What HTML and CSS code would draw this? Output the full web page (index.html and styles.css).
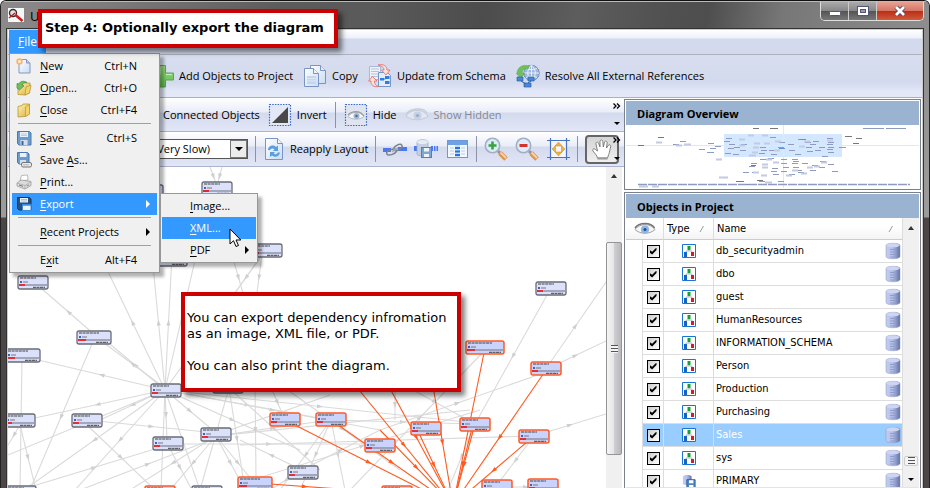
FILE: index.html
```html
<!DOCTYPE html>
<html lang="en">
<head>
<meta charset="utf-8">
<title>Dependency diagram</title>
<link rel="stylesheet" href="styles.css">
</head>
<body>
<svg class="defs" aria-hidden="true">
  <defs>
    <linearGradient id="gDb" x1="0" x2="1"><stop offset="0" stop-color="#c3cdf0"/><stop offset=".45" stop-color="#b4c0ea"/><stop offset="1" stop-color="#6272a3"/></linearGradient>
    <linearGradient id="gFold" x1="0" y1="0" x2="1" y2="1"><stop offset="0" stop-color="#fdf3b8"/><stop offset="1" stop-color="#dcae3c"/></linearGradient>
    <linearGradient id="gPage" x1="0" y1="0" x2="1" y2="1"><stop offset="0" stop-color="#fff"/><stop offset="1" stop-color="#c9dcf5"/></linearGradient>
    <linearGradient id="gPlus" x1="0" y1="0" x2="0" y2="1"><stop offset="0" stop-color="#9bdc83"/><stop offset="1" stop-color="#5cba4c"/></linearGradient>
  </defs>
  <symbol id="i-new" viewBox="0 0 16 16"><path d="M3 1.500h7.500l3.500 3.500v10h-11z" fill="url(#gPage)" stroke="#8298bd"/><path d="M10.500 1.500v3.500h3.500" fill="#b9d0ee" stroke="#8298bd"/><circle cx="3.500" cy="3.500" r="3.200" fill="#f6b27a"/><circle cx="3.500" cy="3.500" r="1.500" fill="#fff3c4"/></symbol>
  <symbol id="i-close" viewBox="0 0 16 16"><path d="M2 4.500l4-1 1-1.500h6.500v10l-4.500 2.500-7 .5z" fill="url(#gFold)" stroke="#b9962f" stroke-width=".8"/><path d="M9.500 5l4-2.500v9.500l-4 2.500z" fill="#f2d36d" stroke="#b9962f" stroke-width=".7"/></symbol>
  <symbol id="i-open" viewBox="0 0 16 16"><path d="M2 6l4-1 2-2h6l-.5 10-4.500 2-7-.5z" fill="url(#gFold)" stroke="#b9962f" stroke-width=".8"/><path d="M10 7l5-2-1.500 8-4.500 2z" fill="#f2d36d" stroke="#b9962f" stroke-width=".7"/><path d="M1 8V3.500L3 4c1-3 5-3.500 8-1.500-3-.5-4.500.5-5 2.500l2 .8L3.500 10z" fill="#72c05b" stroke="#3f8d39" stroke-width=".7"/></symbol>
  <symbol id="i-save" viewBox="0 0 16 16"><path d="M1.500 1.500h12l1.500 1.500v12h-12l-1.500-1.500z" fill="#6c9bd0" stroke="#4a78ad"/><path d="M4 2h8v5H4z" fill="#e9f1f9"/><path d="M5 4h6M5 5.500h6" stroke="#a9bccd" stroke-width=".7"/><path d="M4.500 10h7v5h-7z" fill="#d4dfeb"/><path d="M5.500 11h2v4h-2z" fill="#3d6695"/></symbol>
  <symbol id="i-saveas" viewBox="0 0 16 16"><path d="M1.500 .5h10l1.500 1.500v10h-10l-1.500-1.500z" fill="#6c9bd0" stroke="#4a78ad"/><path d="M4 1h6.500v4H4z" fill="#e9f1f9"/><path d="M4 8h6v4H4z" fill="#d4dfeb"/><rect x="5.500" y="10.500" width="10" height="4.500" rx="1.500" fill="#e8e8e8" stroke="#777"/><path d="M7.500 12.800h6" stroke="#888" stroke-dasharray="1 1"/></symbol>
  <symbol id="i-print" viewBox="0 0 16 16"><path d="M4 7l1.500-5.500 6-.5L12 6z" fill="#fff" stroke="#aaa" stroke-width=".8"/><path d="M1 9l4-3 10 1.500v4L9 15l-8-3z" fill="#dcdcdc" stroke="#999" stroke-width=".8"/><path d="M1 9l8 2.500 6-4M9 11.500V15" fill="none" stroke="#aaa" stroke-width=".8"/><path d="M3 11l4 1.300" stroke="#777"/><path d="M11 12l2-1.200" stroke="#73b565" stroke-width="1.200"/></symbol>
  <symbol id="i-export" viewBox="0 0 16 16"><path d="M1.500 1.500h12l1.500 1.500v11h-12l-1.500-1.500z" fill="#24517f" stroke="#153759"/><path d="M4 2h8v4.500H4z" fill="#e9f1f9"/><path d="M5 3.500h6M5 5h6" stroke="#9ab" stroke-width=".7"/><rect x="6.500" y="8.500" width="8.500" height="6" fill="#e8f4ff" stroke="#3a8be0"/><path d="M6.500 9h8.500" stroke="#3a8be0" stroke-width="1.500"/></symbol>
  <symbol id="i-plus" viewBox="0 0 24 24"><path d="M8.500 1.500h7v7.500h8v7h-8v7h-7v-7h-7V9h7z" fill="url(#gPlus)" stroke="#5aa652" stroke-linejoin="round"/><path d="M10 3v7.500H3M16 10.500h6" fill="none" stroke="#c5efb5"/></symbol>
  <symbol id="i-copy" viewBox="0 0 24 24"><path d="M7.500 1.500h10l5 5v13h-15z" fill="url(#gPage)" stroke="#7a95c4"/><path d="M17.500 1.500v5h5" fill="#dfe9f8" stroke="#7a95c4"/><path d="M1.500 4.500h9l5 5v13h-14z" fill="url(#gPage)" stroke="#7a95c4"/><path d="M10.500 4.500v5h5" fill="#eef4fc" stroke="#7a95c4"/><path d="M4 12h9v8H4z" fill="#c5d5ec"/><path d="M4 14.500h9M4 17h9" stroke="#dfe9f6"/></symbol>
  <symbol id="i-update" viewBox="0 0 24 24"><path d="M1.500 2.500h11v13h-11z" fill="#eef2fb" stroke="#a9b7da"/><path d="M3 5h8M3 7.500h8M3 10h8M3 12.500h8" stroke="#b4c0de"/><path d="M10.500 8.500h9l3 3v11h-12z" fill="#e1ebfa" stroke="#7a95c4"/><path d="M12 14h4v2.500h-4zM17 12h4.500v3H17zM17 17h4.500v3H17z" fill="#2f7dde"/><path d="M15.500 15h2" stroke="#2f7dde"/><path d="M10 1c6-1.500 9 1.500 9 5h3l-4 5-4.500-5h2.500c0-2.500-2-4-6-5z" fill="#fbe0dc" stroke="#e0695f" stroke-width=".8"/><path d="M10.500 22.500c-5 .8-8-1.500-7.500-5.500H.5l4-4.500 4.500 4.500H6.500c-.2 2.500 1 4.500 4 5.500z" fill="#fbe0dc" stroke="#e0695f" stroke-width=".8"/></symbol>
  <symbol id="i-resolve" viewBox="0 0 24 24"><circle cx="15.500" cy="9" r="7.700" fill="#9db9e0" stroke="#7190c2"/><path d="M15.500 1.500v15M8 9h15M10 4.500c4 1.500 7 1.500 11 0M10 13.500c4-1.500 7-1.500 11 0M15.500 1c-5 5-5 11 0 16M15.500 1c5 5 5 11 0 16" fill="none" stroke="#edf3fc" stroke-width=".9"/><path d="M1 10C1 3 7 0 13 2l-1 3c-4-1-6 1-6 4l3 .5L4.500 14 .5 9.500z" fill="#6fbf5b" stroke="#58a94f" stroke-width=".6"/><path d="M1 13h6v4H1zM12 13h6v4h-6zM8 19h7v4H8z" fill="#4b86d6" stroke="#2e62ab" stroke-width=".7"/><path d="M5 17l5 3M15 17l-3 2" stroke="#2e62ab"/></symbol>
  <symbol id="i-invert" viewBox="0 0 24 24"><rect x="1.500" y="1.500" width="21" height="21" fill="#e3e8f6" stroke="#3a66c4" stroke-width="1.200" stroke-dasharray="1.500 1.200"/><path d="M20 4v16H4z" fill="#494949"/></symbol>
  <symbol id="i-hide" viewBox="0 0 24 24"><rect x="1.500" y="1.500" width="21" height="21" fill="#dfe4f0" stroke="#3a66c4" stroke-width="1.200" stroke-dasharray="1.500 1.200"/><path d="M4 13.500c4-5.500 12-5.500 16 0-4 3.500-12 3.500-16 0z" fill="#f7f8fa" stroke="#a5a9af" stroke-width=".8"/><path d="M4 12c4-4.500 12-5 16 1" fill="none" stroke="#9a9ea4" stroke-width="1.200"/><circle cx="12.500" cy="13" r="3" fill="#9db5d6"/><circle cx="12.500" cy="13" r="1.200" fill="#56688a"/></symbol>
  <symbol id="i-eyeoff" viewBox="0 0 24 24"><path d="M1 13C6 5.500 18 5.500 23 13c-5 5-17 5-22 0z" fill="#e2e7f1" stroke="#c3c9d8" stroke-width="1"/><path d="M1 11C6 5 18 4 22 10" fill="none" stroke="#c6ccda" stroke-width="1.500"/><circle cx="12.500" cy="12.500" r="4" fill="#c5d1e6"/><circle cx="12.500" cy="12.500" r="1.600" fill="#9fabc4"/></symbol>
  <symbol id="i-eye" viewBox="0 0 22 14"><path d="M1 7.500C5 1 17 1 21 7.500c-5 5-15 5-20 0z" fill="#f6f6f6" stroke="#9f9f9f"/><path d="M1 6C5 0 17 0 20.500 6" fill="none" stroke="#757575" stroke-width="1.600"/><circle cx="11" cy="7.500" r="4" fill="#8fb3e2"/><circle cx="11" cy="7.500" r="1.500" fill="#1f4c8c"/></symbol>
  <symbol id="i-refresh" viewBox="0 0 24 24"><path d="M2.500 1.500h12l5 5v16h-17z" fill="url(#gPage)" stroke="#7a95c4"/><path d="M14.500 1.500v5h5" fill="#eef4fc" stroke="#7a95c4"/><path d="M5 13c0-4 5-6 8-3l2-1.500V14h-5l1.500-1.700c-2-1.500-4-.7-4.500 1zM17 15.500c-.5 4-5 5.500-8 3L7 20v-5h5l-1.500 1.600c2 1.400 3.700.6 4.300-1.100z" fill="#5b9ee0"/></symbol>
  <symbol id="i-link" viewBox="0 0 24 24"><path d="M0 11h8v4H0zM15 10h9v4h-9z" fill="#4b78f0"/><g fill="none" stroke="#7d838d" stroke-width="1.500"><ellipse cx="8.500" cy="15" rx="5" ry="2.500" transform="rotate(-20 8.500 15)"/><ellipse cx="15" cy="10.500" rx="4.500" ry="2.500" transform="rotate(-30 15 10.500)"/></g><path d="M9 14.500l6-3.500" stroke="#a5abb5" stroke-width="1.500"/></symbol>
  <symbol id="i-dbsave" viewBox="0 0 24 24"><path d="M0 9h4v5H0zM17 9h2v5h-2zM20 9h1.500v5H20zM22.500 9H24v5h-1.500z" fill="#4b78f0"/><path d="M3 5c0-3 11-3 11 0v12c0 2.500-11 2.500-11 0z" fill="#c4cfe2" stroke="#98a6c0" stroke-width=".7"/><ellipse cx="8.500" cy="5" rx="5.500" ry="2" fill="#e6ecf6"/><rect x="7.500" y="10.500" width="10" height="10" fill="#7ba6d6" stroke="#5580b0"/><path d="M10 11h5v3.500h-5zM10 17h5v3h-5z" fill="#eef3f9"/></symbol>
  <symbol id="i-table" viewBox="0 0 24 24"><rect x="2.500" y="3.500" width="20" height="17" fill="#f3f8ff" stroke="#6c98da"/><path d="M3 4h19v4H3z" fill="#6fa1e6"/><path d="M5 11h4M5 14h4M5 17h4M16 11h4M16 14h4M16 17h4" stroke="#b5cdee"/><path d="M10 8h5v12h-5z" fill="#c3dbf8"/><path d="M10 11h5M10 14.500h5M10 18h5" stroke="#2c71d8" stroke-width="2"/></symbol>
  <symbol id="i-zoomin" viewBox="0 0 24 24"><path d="M14 14l2.500 2.500" stroke="#8a98ad" stroke-width="3"/><path d="M16 16l6 6" stroke="#dd9450" stroke-width="5"/><path d="M16.500 15.500l5.500 5.500" stroke="#fcd3a2" stroke-width="1.800"/><circle cx="8.500" cy="8.500" r="7.200" fill="#dceafb" stroke="#a3aebf" stroke-width="1.600"/><path d="M8.500 4.500v8M4.500 8.500h8" stroke="#36a53c" stroke-width="2.600"/></symbol>
  <symbol id="i-zoomout" viewBox="0 0 24 24"><path d="M14 14l2.500 2.500" stroke="#8a98ad" stroke-width="3"/><path d="M16 16l6 6" stroke="#dd9450" stroke-width="5"/><path d="M16.500 15.500l5.500 5.500" stroke="#fcd3a2" stroke-width="1.800"/><circle cx="8.500" cy="8.500" r="7.200" fill="#dceafb" stroke="#a3aebf" stroke-width="1.600"/><path d="M4.500 8.500h8" stroke="#d4332c" stroke-width="2.800"/></symbol>
  <symbol id="i-fit" viewBox="0 0 24 24"><path d="M5 4h15v16H5z" fill="#f4f6fb"/><path d="M4.500 1v22M20.500 1v22M1 3.500h23M1 20.500h23" stroke="#4672c6" stroke-width="1.200"/><path d="M12.500 5l3.500 4H9zM12.500 19l3.500-4H9zM6 12l3.500-3.500v7zM19 12l-3.500-3.500v7z" fill="#f0b13c" stroke="#c58d2a" stroke-width=".5"/></symbol>
  <symbol id="i-hand" viewBox="0 0 24 24"><path d="M7.500 21c-.5-3-3-4.500-4.500-7-1-2 1-3 2.500-1.500L7.500 14 6 7c-.4-2 2-2.500 2.600-.6L10 10V4.500c0-2 2.600-2 2.800 0l.5 5.500 1.200-4.700c.5-1.800 2.800-1.300 2.600.6L16.500 11l1.700-2.500c1-1.500 3-.6 2.500 1.200-1 3.500-1 5.300-2 7.800l-1.200 3.500z" fill="#fff" stroke="#666" stroke-width=".8" stroke-linejoin="round"/><path d="M7.500 21.500h10" stroke="#999" stroke-width="2"/></symbol>
  <symbol id="i-schema" viewBox="0 0 14 14"><path d="M.5.500h13v13H.500z" fill="#fff" stroke="#1a74d4" /><path d="M7 4v3M4 10V7h6v3" fill="none" stroke="#a8b6c4"/><path d="M5.500 2h3v4h-3z" fill="#12a033"/><path d="M2 8h3v5H2z" fill="#1564c0"/><path d="M9 8h3v4H9z" fill="#d31c24"/></symbol>
  <symbol id="i-db" viewBox="0 0 16 18"><path d="M1 3.500C1 .500 15 .500 15 3.500v11c0 3-14 3-14 0z" fill="url(#gDb)" stroke="#8a97c2" stroke-width=".5"/><ellipse cx="8" cy="3.300" rx="6.700" ry="2" fill="#cdd5f3"/><path d="M5 7.500h5M5 10h5M5 12.500h5M5 15h5" stroke="#8d9ac6" stroke-width=".9"/></symbol>
  <symbol id="i-filegroup" viewBox="0 0 16 16"><path d="M1 3C1 .5 11 .5 11 3v8c0 2-10 2-10 0z" fill="url(#gDb)"/><path d="M5.500 6.500h9.500v9H5.500z" fill="#4f86c6" stroke="#2f5d92"/><path d="M8 7h5v3.500H8zM8 12.500h5V16H8z" fill="#fff"/></symbol>
  <symbol id="i-app" viewBox="0 0 16 16"><path d="M0 0h16v14H0z" fill="#f7f7f7"/><circle cx="5" cy="5" r="3.500" fill="#dfe3e8" stroke="#333" stroke-width="1.400"/><path d="M7.500 7l7 6" stroke="#cc1e20" stroke-width="2.500"/><path d="M1 10l6-5" stroke="#cc1e20" stroke-width="1.500"/></symbol>
  <symbol id="i-more" viewBox="0 0 8 6"><path d="M.500 .5L3 3 .5 5.500M4 .5L6.500 3 4 5.500" fill="none" stroke="#000" stroke-width="1.300"/></symbol>
  <symbol id="i-sort" viewBox="0 0 8 8"><path d="M1 7L4.500 1" stroke="#9a9a9a"/></symbol>
</svg>

<div class="window">
  <header class="titlebar">
    <svg class="app-icon"><use href="#i-app"/></svg>
    <span class="app-title">U</span>
    <div class="controls">
      <button class="ctl" aria-label="Minimize"><svg viewBox="0 0 14 10"><rect x="1.500" y="5.500" width="11" height="4" rx="1" fill="#fff" stroke="#555577"/></svg></button>
      <button class="ctl" aria-label="Restore"><svg viewBox="0 0 14 10"><rect x="1.500" y=".5" width="11" height="9" fill="#fff" stroke="#555577"/><rect x="4.500" y="3.500" width="5" height="3" fill="#9a9aa8" stroke="#555577"/></svg></button>
      <button class="ctl ctl-close" aria-label="Close"><svg viewBox="0 0 14 10"><path d="M3 1l8 8M11 1l-8 8" stroke="#56405a" stroke-width="4.500"/><path d="M3 1l8 8M11 1l-8 8" stroke="#fff" stroke-width="2.800"/></svg></button>
    </div>
  </header>

  <div class="client">
    <nav class="menubar">
      <button class="menu-top"><u>F</u>ile</button>
      <ul class="menu">
        <li><button><svg><use href="#i-new"/></svg><span><u>N</u>ew</span><kbd>Ctrl+N</kbd></button></li>
        <li><button><svg><use href="#i-open"/></svg><span><u>O</u>pen...</span><kbd>Ctrl+O</kbd></button></li>
        <li><button><svg><use href="#i-close"/></svg><span><u>C</u>lose</span><kbd>Ctrl+F4</kbd></button></li>
        <li class="rule"></li>
        <li><button><svg><use href="#i-save"/></svg><span><u>S</u>ave</span><kbd>Ctrl+S</kbd></button></li>
        <li><button><svg><use href="#i-saveas"/></svg><span>Save <u>A</u>s...</span></button></li>
        <li><button><svg><use href="#i-print"/></svg><span><u>P</u>rint...</span></button></li>
        <li class="parent"><button class="active"><svg><use href="#i-export"/></svg><span><u>E</u>xport</span><i class="more"></i></button>
          <ul class="menu submenu">
            <li><button><span><u>I</u>mage...</span></button></li>
            <li><button class="active"><span><u>X</u>ML...</span></button></li>
            <li><button><span><u>P</u>DF</span><i class="more"></i></button></li>
          </ul>
        </li>
        <li class="rule"></li>
        <li><button><span class="no-icon"><u>R</u>ecent Projects</span><i class="more"></i></button></li>
        <li class="rule"></li>
        <li><button><span class="no-icon">E<u>x</u>it</span><kbd>Alt+F4</kbd></button></li>
      </ul>
    </nav>

    <div class="toolbar toolbar-main">
      <button class="tool"><svg><use href="#i-plus"/></svg>Add Objects to Project</button>
      <button class="tool"><svg><use href="#i-copy"/></svg>Copy</button>
      <button class="tool"><svg><use href="#i-update"/></svg>Update from Schema</button>
      <button class="tool"><svg><use href="#i-resolve"/></svg>Resolve All External References</button>
    </div>

    <div class="work">
      <main class="editor">
        <div class="toolbar toolbar-select">
          <button class="tool">Connected Objects</button>
          <button class="tool"><svg><use href="#i-invert"/></svg>Invert</button>
          <i class="divider"></i>
          <button class="tool"><svg><use href="#i-hide"/></svg>Hide</button>
          <button class="tool" disabled><svg><use href="#i-eyeoff"/></svg>Show Hidden</button>
          <button class="overflow" aria-label="More selection tools"><svg><use href="#i-more"/></svg><i class="down"></i></button>
        </div>
        <div class="toolbar toolbar-layout">
          <span class="combo"><select aria-label="Layout quality"><option>(Very Slow)</option></select><i class="drop"></i></span>
          <i class="divider"></i>
          <button class="tool"><svg><use href="#i-refresh"/></svg>Reapply Layout</button>
          <i class="divider"></i>
          <button class="tool" aria-label="Link"><svg><use href="#i-link"/></svg></button>
          <button class="tool" aria-label="Storage"><svg><use href="#i-dbsave"/></svg></button>
          <button class="tool" aria-label="Columns"><svg><use href="#i-table"/></svg></button>
          <i class="divider"></i>
          <button class="tool" aria-label="Zoom in"><svg><use href="#i-zoomin"/></svg></button>
          <button class="tool" aria-label="Zoom out"><svg><use href="#i-zoomout"/></svg></button>
          <button class="tool" aria-label="Fit"><svg><use href="#i-fit"/></svg></button>
          <i class="divider"></i>
          <button class="tool pressed" aria-label="Pan"><svg><use href="#i-hand"/></svg></button>
          <button class="overflow" aria-label="More layout tools"><svg><use href="#i-more"/></svg><i class="down"></i></button>
        </div>
        <div class="canvas-row">
          <svg class="canvas" id="diagram"></svg>
          <div class="scroll canvas-scroll"><i class="up"></i><div class="thumb"><i class="grip"></i></div></div>
        </div>
      </main>

      <aside class="side">
        <section class="panel">
          <h2>Diagram Overview</h2>
          <svg class="overview" id="overview"></svg>
        </section>
        <section class="panel panel-grow">
          <h2>Objects in Project</h2>
          <div class="objects">
            <table>
              <colgroup><col class="c-indent"><col class="c-check"><col class="c-type"><col></colgroup>
              <thead><tr><th colspan="2"><svg class="eye"><use href="#i-eye"/></svg></th><th>Type<svg class="sort"><use href="#i-sort"/></svg></th><th>Name<svg class="sort"><use href="#i-sort"/></svg></th></tr></thead>
              <tbody>
                <tr><td></td><td><input type="checkbox" checked aria-label="Show db_securityadmin"></td><td><svg class="kind"><use href="#i-schema"/></svg></td><td><div class="name">db_securityadmin<svg><use href="#i-db"/></svg></div></td></tr>
                <tr><td></td><td><input type="checkbox" checked aria-label="Show dbo"></td><td><svg class="kind"><use href="#i-schema"/></svg></td><td><div class="name">dbo<svg><use href="#i-db"/></svg></div></td></tr>
                <tr><td></td><td><input type="checkbox" checked aria-label="Show guest"></td><td><svg class="kind"><use href="#i-schema"/></svg></td><td><div class="name">guest<svg><use href="#i-db"/></svg></div></td></tr>
                <tr><td></td><td><input type="checkbox" checked aria-label="Show HumanResources"></td><td><svg class="kind"><use href="#i-schema"/></svg></td><td><div class="name">HumanResources<svg><use href="#i-db"/></svg></div></td></tr>
                <tr><td></td><td><input type="checkbox" checked aria-label="Show INFORMATION_SCHEMA"></td><td><svg class="kind"><use href="#i-schema"/></svg></td><td><div class="name">INFORMATION_SCHEMA<svg><use href="#i-db"/></svg></div></td></tr>
                <tr><td></td><td><input type="checkbox" checked aria-label="Show Person"></td><td><svg class="kind"><use href="#i-schema"/></svg></td><td><div class="name">Person<svg><use href="#i-db"/></svg></div></td></tr>
                <tr><td></td><td><input type="checkbox" checked aria-label="Show Production"></td><td><svg class="kind"><use href="#i-schema"/></svg></td><td><div class="name">Production<svg><use href="#i-db"/></svg></div></td></tr>
                <tr><td></td><td><input type="checkbox" checked aria-label="Show Purchasing"></td><td><svg class="kind"><use href="#i-schema"/></svg></td><td><div class="name">Purchasing<svg><use href="#i-db"/></svg></div></td></tr>
                <tr class="selected"><td></td><td><input type="checkbox" checked aria-label="Show Sales"></td><td><svg class="kind"><use href="#i-schema"/></svg></td><td><div class="name">Sales<svg><use href="#i-db"/></svg></div></td></tr>
                <tr><td></td><td><input type="checkbox" checked aria-label="Show sys"></td><td><svg class="kind"><use href="#i-schema"/></svg></td><td><div class="name">sys<svg><use href="#i-db"/></svg></div></td></tr>
                <tr><td></td><td><input type="checkbox" checked aria-label="Show PRIMARY"></td><td><svg class="kind"><use href="#i-filegroup"/></svg></td><td><div class="name">PRIMARY<svg><use href="#i-db"/></svg></div></td></tr>
              </tbody>
            </table>
            <div class="scroll list-scroll"><i class="up"></i><div class="thumb"><i class="grip"></i></div><i class="down"></i></div>
          </div>
        </section>
      </aside>
    </div>
  </div>
</div>

<div class="callout callout-step">Step 4: Optionally export the diagram</div>
<div class="callout callout-note"><p>You can export dependency infromation<br>as an image, XML file, or PDF.</p><p>You can also print the diagram.</p></div>
<svg class="cursor" viewBox="0 0 13 20"><path d="M1 1v15l3.500-3.300L7 18.500l2.500-1-2.500-5.500h4.800z" fill="#fff" stroke="#000"/></svg>
<script src="diagram.js"></script>
</body>
</html>
```
FILE: styles.css
```css
* { box-sizing: border-box; }
body { margin: 0; height: 100vh; overflow: hidden; position: relative; background: #fff; font: 11px/16px "Open Sans", "Noto Sans", sans-serif; color: #000; }
button, select { font: inherit; color: inherit; border: 0; padding: 0; margin: 0; background: none; }
svg { display: block; flex: none; }
.defs { position: absolute; width: 0; height: 0; }

.window { height: 100vh; display: flex; flex-direction: column; padding: 0 7px; border-top: 1px solid #111; border-left: 1px solid #222; border-right: 1px solid #222; border-radius: 6px 6px 0 0; background: linear-gradient(#8b8b8b, #9c9c9c 216px, #4c4647 217px, #4c4647); overflow: hidden; }
.titlebar { height: 28px; flex: none; display: flex; align-items: center; gap: 6px; margin: 0 -7px; padding-left: 7px; background: linear-gradient(100deg, #8c8a8a 0, #7d7a7a 12%, #5d5b5b 30%, #5a5a5a 40%, #4c4c4c 52%, #5d5d5d 62%, #505050 72%, #4e4e4e 76%, #777 84%, #8e8e8e 100%); border-top: 1px solid #bbb; }
.app-icon { width: 16px; height: 16px; }
.app-title { font-size: 13px; }
.controls { margin-left: auto; margin-right: 5px; align-self: flex-start; display: flex; height: 19px; border: 1px solid #ddd; border-top: 0; border-radius: 0 0 5px 5px; overflow: hidden; }
.ctl { width: 28px; display: grid; place-items: center; border-right: 1px solid #ccc; background: linear-gradient(#aaa, #888 48%, #555 52%, #777); }
.ctl svg { width: 14px; height: 10px; }
.ctl-close { width: 46px; border-right: 0; background: linear-gradient(#e7a193, #d77663 48%, #b92f17 52%, #cf5a3c); }

.client { flex: 1; min-height: 0; display: flex; flex-direction: column; margin: 0 -1px; border: 1px solid #ccc; border-bottom: 0; background: #fff; outline: 1px solid #333; }
.menubar { position: relative; z-index: 2; height: 25px; flex: none; display: flex; background: linear-gradient(#fff, #eef1f9 8px, #d3daed 9px); border-bottom: 1px solid #adb2bd; }
.menu-top { width: 37px; height: 23px; margin-left: 1px; background: #39f; color: #fff; font-size: 12px; }
.menu { position: absolute; top: 23px; left: 1px; width: 151px; margin: 0; padding: 1px 2px; list-style: none; background: #f0f0f0; border: 1px solid #979797; box-shadow: 4px 4px 3px rgba(0, 0, 0, .3); }
.menu button { width: 100%; height: 22px; display: flex; align-items: center; padding-left: 4px; text-align: left; gap: 8px; }
.menu svg { width: 16px; height: 16px; }
.menu u { text-underline-offset: 2px; }
.menu kbd { font: inherit; margin-left: auto; margin-right: 20px; }
.menu .active { background: #39f; color: #fff; }
.menu .no-icon { margin-left: 24px; }
.menu .rule { height: 6px; padding: 2px 6px; }
.menu .rule::after { content: ""; display: block; height: 1px; background: #a0a0a0; }
.parent { position: relative; }
.submenu { top: 0; left: 148px; width: 98px; padding: 1px; }
.submenu button { padding-left: 28px; }
.more { margin-left: auto; margin-right: 7px; border: 4px solid transparent; border-left: 4px solid; border-right: 0; }

.toolbar { display: flex; align-items: center; flex: none; gap: 8px; }
.toolbar-main { height: 43px; padding-left: 142px; gap: 10px; background: linear-gradient(#d8deef, #d3daed 27px, #e2e7f7 36px, #e4e9f8); border-bottom: 1px solid #a8b0c8; }
.toolbar-select, .toolbar-layout { height: 35px; background: linear-gradient(#fff, #e9edf7 14px, #d3daed 15px, #e2e7f7); border-bottom: 1px solid #abb3cd; }
.toolbar-select { height: 34px; padding-left: 155px; }
.toolbar-layout { padding-left: 132px; gap: 7px; }
.tool { display: flex; align-items: center; gap: 5px; white-space: nowrap; }
.tool svg { width: 24px; height: 24px; }
.toolbar-layout .tool { gap: 3px; }
.tool:disabled { color: #858994; }
.divider { width: 1px; height: 26px; background: #8d93a3; }
.pressed { height: 29px; padding: 0 3px; border: 2px solid #666; border-radius: 4px; background: linear-gradient(#d5d5d5, #efefef); margin-right: -40px; }
.overflow { position: relative; align-self: stretch; margin-left: auto; margin-right: 3px; display: flex; flex-direction: column; align-items: center; justify-content: space-between; padding: 5px 0 6px; width: 8px; }
.overflow svg { width: 8px; height: 6px; }
.down { border: 3px solid transparent; border-top: 3px solid #000; border-bottom: 0; }
.up { border: 3px solid transparent; border-bottom: 4px solid #333; border-top: 0; }
.combo { width: 108px; height: 20px; display: flex; border: 1px solid #555; background: #fff; }
.combo select { flex: 1; min-width: 0; appearance: none; padding-left: 13px; }
.drop { width: 17px; border: 1px solid #777; background: #ececec; display: grid; place-items: center; }
.drop::after { content: ""; border: 4px solid transparent; border-top: 4px solid #000; border-bottom: 0; }

.work { flex: 1; min-height: 0; display: flex; }
.editor { flex: 1; min-width: 0; display: flex; flex-direction: column; }
.canvas-row { flex: 1; min-height: 0; display: flex; }
.canvas { flex: 1; min-width: 0; height: 100%; background: #fff; overflow: hidden; }
.scroll { flex: none; display: flex; flex-direction: column; align-items: center; background: #f0f0f0; }
.canvas-scroll { width: 16px; padding-top: 7px; margin-right: 2px; }
.canvas-scroll .thumb { width: 100%; height: 213px; margin-top: 64px; }
.thumb { display: grid; place-items: center; border: 1px solid #949494; border-radius: 2px; background: linear-gradient(90deg, #f5f5f5, #e6e6e8 48%, #cfcfd2 52%, #b9b9bd); }
.grip { width: 7px; height: 8px; background: repeating-linear-gradient(#555 0 1px, #f4f4f4 1px 3px); }

.side { width: 298px; flex: none; display: flex; flex-direction: column; gap: 2px; padding: 1px 1px 0 0; }
.panel { border: 1px solid #7c8089; padding: 1px; }
.panel h2 { margin: 0; height: 24px; padding-left: 11px; font-size: 11px; line-height: 26px; background: #99b3d1; }
.overview { width: 100%; height: 63px; }
.panel-grow { flex: 1; min-height: 0; border-bottom: 0; padding-bottom: 0; display: flex; flex-direction: column; }
.panel-grow h2 { flex: none; }
.objects { flex: 1; min-height: 0; display: flex; overflow: hidden; border-bottom: 1px solid #e4e4e4; font-family: "DejaVu Sans Condensed", "DejaVu Sans", sans-serif; }
.objects table { flex: 1; table-layout: fixed; border-collapse: separate; border-spacing: 0; align-self: flex-start; }
.c-indent { width: 17px; } .c-check { width: 21px; } .c-type { width: 50px; }
th { height: 22px; padding: 0 3px; font-weight: normal; text-align: left; background: linear-gradient(#fff 8px, #f4f4f5); border-right: 1px solid #ddd; border-bottom: 1px solid #ccc; }
th .sort { float: right; width: 8px; height: 8px; margin: 4px 3px 0 0; }
.eye { width: 22px; height: 14px; margin-left: 5px; }
td { height: 23px; padding: 0; border-right: 1px solid #ddd; border-bottom: 1px solid #ddd; }
td:first-child { border-bottom: 0; }
td input { appearance: none; display: block; width: 13px; height: 13px; margin: 0 auto; border: 1px solid #000; background: linear-gradient(135deg, #ccc, #fff); position: relative; }
td input::after { content: ""; position: absolute; inset: 2px; background: #000; clip-path: polygon(0 35%, 38% 62%, 100% 0, 100% 35%, 38% 100%, 0 70%); }
.kind { width: 14px; height: 14px; margin: 0 auto; }
.name { display: flex; align-items: center; justify-content: space-between; padding: 0 1px 0 2px; }
.name svg { width: 16px; height: 18px; }
.selected td:not(:first-child) { background: #9cf; color: #fff; }
.list-scroll { width: 16px; padding: 8px 0 6px; }
.list-scroll .thumb { width: 14px; height: 10px; margin-top: auto; margin-bottom: 12px; border-color: #ccc; background: #f4f4f4; }

.callout { position: absolute; background: #fff; border: 4px solid #c00; box-shadow: 4px 4px 5px rgba(0, 0, 0, .5); font-family: "DejaVu Sans", sans-serif; font-size: 13px; z-index: 5; white-space: nowrap; }
.callout p { margin: 0 0 16px; }
.callout-step { left: 38px; top: 9px; width: 300px; height: 39px; padding: 7px 3px; font-weight: bold; }
.callout-note { left: 181px; top: 292px; width: 280px; height: 100px; padding: 14px 2px; }
.cursor { position: absolute; left: 229px; top: 228px; width: 13px; height: 20px; z-index: 6; }

.edge { fill: none; stroke: #dadada; stroke-width: 1.1; }
.edge-hot { stroke: #ff5a1f; }
.box { fill: #dbe1fb; stroke: #6a6c75; stroke-width: 1.3; }
.box-hot { fill: #cad3fb; stroke: #ff5a24; stroke-width: 1.5; }
.dash { stroke: #8e9ac0; }
.dash-dark { stroke: #777; }
.dash-soft { stroke: #c2cae4; stroke-width: 2; }
.lens { fill: #d3e8ff; }
.axis { stroke: #e4e7ee; }
```
FILE: diagram.js
```js
const NS = "http://www.w3.org/2000/svg";
function add(parent, tag, attrs) {
  const el = document.createElementNS(NS, tag);
  for (const key in attrs) el.setAttribute(key, attrs[key]);
  parent.appendChild(el);
  return el;
}

const scene = add(document.getElementById("diagram"), "g", { transform: "translate(-8 -167)" });

const edges = [
  [210, 167, 217, 186], [222, 167, 217, 186], [95, 335, 42, 289], [165, 390, 105, 340], [165, 388, 100, 340], [165, 390, 38, 360],
  [165, 390, 30, 419], [165, 390, 100, 420], [165, 390, 100, 255], [165, 390, 152, 255], [165, 390, 172, 255],
  [165, 390, 202, 230], [165, 390, 262, 255], [232, 255, 245, 300], [262, 255, 256, 300], [262, 255, 230, 300],
  [165, 390, 8, 455], [165, 390, 24, 490], [165, 390, 75, 490], [165, 390, 161, 490], [165, 390, 167, 440],
  [165, 390, 215, 432], [165, 390, 330, 420], [165, 390, 380, 430], [165, 390, 475, 423], [165, 390, 300, 450], [165, 390, 200, 490],
  [92, 344, 30, 490], [22, 358, 20, 490], [20, 425, 36, 490], [20, 425, 8, 445], [87, 425, 155, 490], [87, 420, 216, 433],
  [20, 490, 168, 445], [80, 490, 216, 438], [168, 445, 192, 490], [168, 444, 370, 444],
  [216, 436, 260, 490], [216, 436, 130, 490], [216, 436, 170, 490], [216, 436, 330, 420], [216, 436, 470, 410], [216, 436, 245, 490],
  [229, 388, 245, 490], [229, 388, 200, 490], [229, 388, 320, 470], [255, 380, 256, 480], [270, 385, 285, 420],
  [285, 388, 400, 470], [331, 420, 345, 490], [331, 420, 300, 490], [331, 420, 475, 424], [331, 420, 280, 490],
  [380, 430, 535, 376], [395, 380, 475, 424], [240, 445, 530, 436], [395, 390, 395, 420],
  [551, 288, 475, 424], [545, 370, 606, 282], [545, 370, 606, 341], [534, 436, 606, 414], [534, 436, 497, 485], [475, 424, 448, 490],
  [350, 490, 490, 345], [302, 470, 240, 440], [302, 470, 380, 430], [302, 470, 270, 490], [230, 430, 330, 395], [512, 487, 540, 487],
  [245, 482, 480, 410]
];
const hot = [[285, 420], [331, 420], [380, 430], [415, 425], [475, 424], [473, 424], [485, 348], [546, 370], [534, 436], [355, 385], [380, 370], [432, 380]];

const nodes = [
  [18, 276], [77, 331, 34], [6, 349, 34], [151, 384], [5, 414], [72, 414], [153, 437], [201, 428], [288, 466], [192, 486], [6, 486],
  [213, 380], [202, 182], [133, 185], [252, 244], [157, 253], [536, 282],
  [270, 413, 30, 1], [238, 477, 34, 1], [145, 486, 30, 1], [466, 341, 38, 1], [531, 362, 30, 1], [316, 413, 30, 1], [411, 422, 30, 1],
  [460, 418, 30, 1], [365, 439, 30, 1], [519, 430, 30, 1], [482, 480, 30, 1], [528, 479, 30, 1], [382, 486, 30, 1]
];

function drawEdge([x1, y1, x2, y2], cls) {
  add(scene, "line", { x1, y1, x2, y2, class: cls });
  const angle = Math.atan2(y2 - y1, x2 - x1) * 180 / Math.PI;
  add(scene, "path", { d: "M-3-2L3 0L-3 2z", fill: cls.includes("hot") ? "#ff5a1f" : "#cfcfcf", transform: `translate(${(x1 + x2) / 2} ${(y1 + y2) / 2}) rotate(${angle})` });
}
edges.forEach(e => drawEdge(e, "edge"));
hot.forEach(([x, y]) => drawEdge([x, y, 453, 505], "edge edge-hot"));
drawEdge([270, 484, 340, 489], "edge edge-hot");

nodes.forEach(([x, y, w = 30, isHot]) => {
  add(scene, "rect", { x, y, width: w, height: 13, rx: 2, class: isHot ? "box box-hot" : "box" });
  add(scene, "path", { d: `M${x + 2} ${y + 2}h${w - 14}`, stroke: "#444", "stroke-dasharray": "3 .6", "stroke-width": 1.2 });
  add(scene, "path", { d: `M${x + 2} ${y + 6}h2`, stroke: "#3b62c4", "stroke-width": 2 });
  add(scene, "path", { d: `M${x + 5} ${y + 6}h5`, stroke: "#777" });
  add(scene, "path", { d: `M${x + 1} ${y + 9}h${w - 2}`, stroke: "#8f93a6", "stroke-width": 1.5 });
  add(scene, "path", { d: `M${x + 1} ${y + 9}h${w === 30 ? 6 : 8}`, stroke: "#e8232a", "stroke-width": 1.8 });
  add(scene, "path", { d: `M${x + w - 15} ${y + 11.300}h12`, stroke: "#444", "stroke-dasharray": "3 .5" });
});

const map = document.getElementById("overview");
add(map, "rect", { x: 98, y: 9, width: 118, height: 23, class: "lens" });
add(map, "path", { d: "M157.500 0v63M0 20.500h293", class: "axis" });
const marks = {
  "dash": [[237,3,21],[260,3,20],[47,19,6],[54,16,6],[82,18,6],[84,23,6],[73,24,6],[89,21,6],[81,27,7],[213,22,7],[125,38,6],[126,47,6],[117,47,6],[123,41,6],
    [100,13,6],[144,12,6],[98,16,6],[103,19,6],[102,23,6],[108,22,6],[115,19,6],[99,28,6],[107,29,6],[114,25,6],[134,22,6],[135,25,6],[133,28,6],[143,25,6],[145,29,6],[153,17,6],[162,19,6],[152,22,6],[163,25,6],[169,29,6],[172,14,6],[179,17,6],[184,19,6],[187,16,6],[180,22,6],[181,26,6],[189,25,6],[193,22,6],[201,13,6],[202,17,6],[201,19,6],[202,22,6],[201,24,6],[202,27,6],[196,31,6],
    [134,34,6],[142,33,6],[155,34,6],[166,34,6],[155,38,6],[166,38,6],[167,36,6],[146,43,6],[145,46,6],[157,42,6],[155,46,6],[167,42,6],[170,45,6],[176,38,6],[184,45,6],[186,40,6],[194,36,6],[193,42,6],[202,39,6],[206,46,6],[147,49,6],[163,49,6],[172,47,6],[152,56,6],[133,56,6]],
  "dash-dark": [[127,3,6],[144,3,8],[32,12,6],[12,20,6],[219,11,7],[230,13,6],[227,18,6],[110,56,8],[121,59,8],[131,55,6],[125,40,5]],
  "dash-soft": [[30,17,6],[50,20,6],[58,19,7],[90,34,6],[93,52,9],[139,57,7],[122,10,6],[136,10,6],[113,14,6],[113,20,6],[128,18,6],[127,22,6],[126,27,6],[123,30,7],[138,18,6],[149,16,6],[148,25,6],[140,34,6],[136,39,6],[136,42,6],[135,50,6],[147,37,6],[166,45,6],[160,50,6],[175,48,6],[181,42,6],[195,37,6],[188,41,6],[13,61,9],[26,61,7],[127,47,6],[178,16,6],[201,15,6],[173,21,6]]
};
for (const cls in marks) marks[cls].forEach(([x, y, w]) => add(map, "path", { d: `M${x} ${y + 0.5}h${w}`, class: cls }));
add(map, "path", { d: "M12 59.500h272", class: "dash", "stroke-dasharray": "9 1", "stroke-width": 1.6 });
add(map, "path", { d: "M153 23.500h6M174 14.500h6", stroke: "#5b93d6" });
```
